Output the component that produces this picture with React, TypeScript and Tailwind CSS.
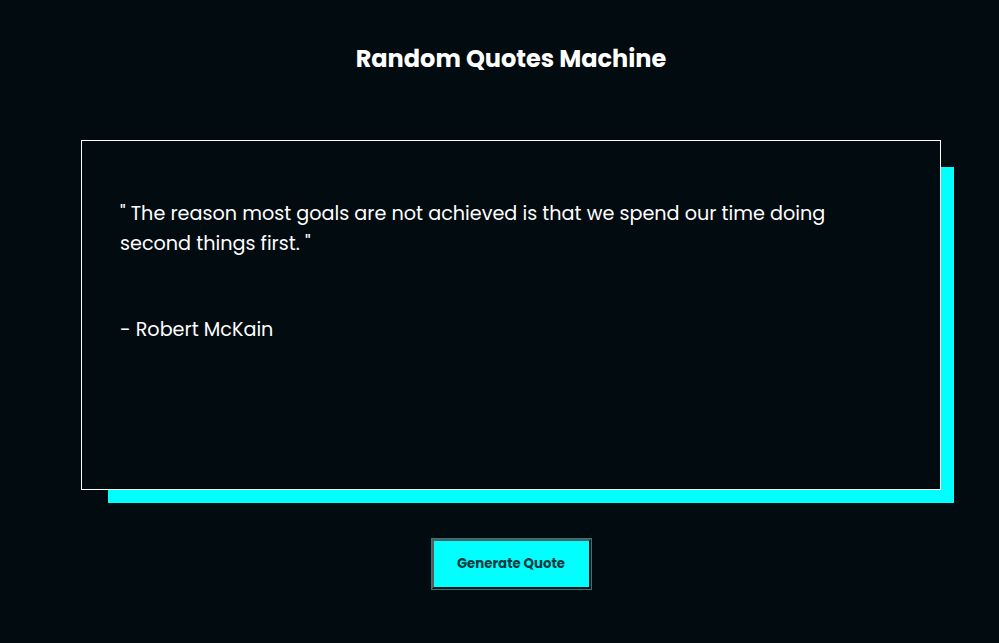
import React from "react";

const App: React.FC = () => {
  return (
    <div className="min-h-screen w-full bg-[#020b10] font-['Poppins','Open_Sans',sans-serif]">
      <div className="ml-[81px] flex w-[860px] flex-col items-center pt-[43px]">
        <h1 className="text-[24px] leading-[32px] font-bold text-white">
          Random Quotes Machine
        </h1>
        <div className="mt-[65px] h-[350px] w-[860px] border border-white bg-[#020b10] pt-[58px] pl-[38px] pr-[100px] shadow-[20px_20px_0_-7px_#00ffff]">
          <p className="text-[19.2px] leading-[30px] text-white">
            " The reason most goals are not achieved is that we spend our time
            doing second things first. "
          </p>
          <p className="mt-[56px] text-[19.2px] leading-[30px] text-white">
            - Robert McKain
          </p>
        </div>
        <button className="mt-[49px] h-[50px] w-[159px] border-2 border-t-[#5a5a5a] border-l-[#5a5a5a] border-r-[#111111] border-b-[#111111] bg-[#00ffff] text-[13.3px] font-bold text-[#0b3a40] shadow-[0_0_0_1px_#2b7c82]">
          Generate Quote
        </button>
      </div>
    </div>
  );
};

export default App;
